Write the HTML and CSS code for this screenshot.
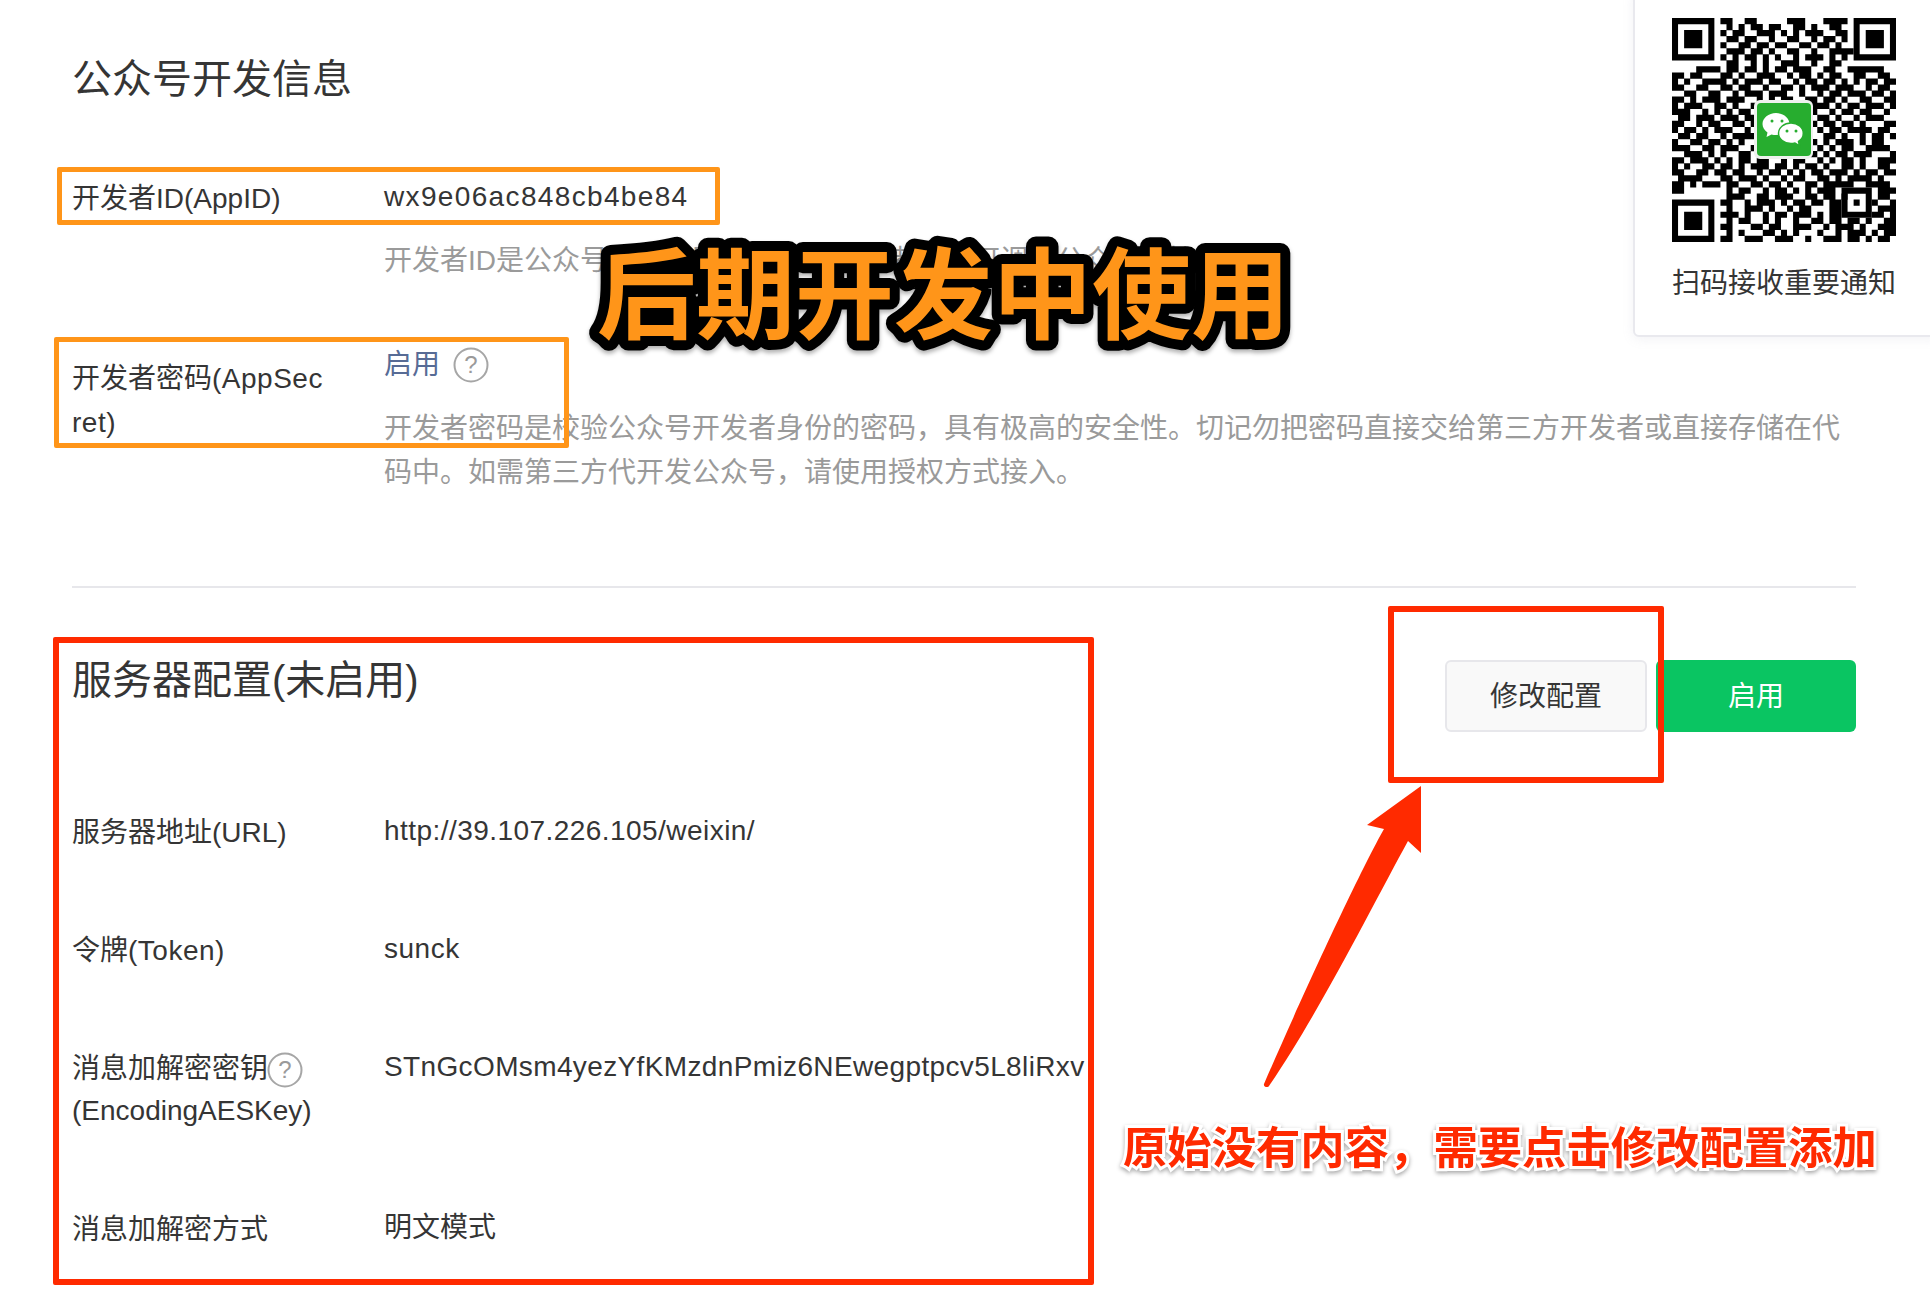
FILE: index.html
```html
<!DOCTYPE html>
<html lang="zh">
<head>
<meta charset="utf-8">
<title>公众号开发信息</title>
<link rel="stylesheet" href="styles.css">
</head>
<body>
<div class="page">
  <main class="main">
    <section class="dev-info">
      <h2 class="title">公众号开发信息</h2>
      <div class="row row-id">
        <div class="label">开发者ID(AppID)</div>
        <div class="content">
          <div class="value value-id">wx9e06ac848cb4be84</div>
          <p class="tips">开发者ID是公众号开发识别码，配合开发者密码可调用公众号的接口能力</p>
        </div>
      </div>
      <div class="row">
        <div class="label label-secret">开发者密码<span class="latin">(AppSecret)</span></div>
        <div class="content">
          <div class="value value-enable"><a class="link">启用</a><svg class="help help-lg" viewBox="0 0 36 36"><circle cx="18" cy="18" r="16.5"/><text x="18" y="26" text-anchor="middle">?</text></svg></div>
          <p class="tips">开发者密码是校验公众号开发者身份的密码，具有极高的安全性。切记勿把密码直接交给第三方开发者或直接存储在代码中。如需第三方代开发公众号，请使用授权方式接入。</p>
        </div>
      </div>
    </section>

    <section class="server">
      <header class="server-head">
        <h2 class="title">服务器配置(未启用)</h2>
        <div class="actions">
          <button class="btn btn-default">修改配置</button>
          <button class="btn btn-primary">启用</button>
        </div>
      </header>
      <div class="server-rows">
        <div class="row">
          <div class="label">服务器地址(URL)</div>
          <div class="value value-url">http://39.107.226.105/weixin/</div>
        </div>
        <div class="row">
          <div class="label">令牌<span class="latin">(Token)</span></div>
          <div class="value value-token">sunck</div>
        </div>
        <div class="row">
          <div class="label"><span class="label-line">消息加解密密钥<svg class="help help-sm" viewBox="0 0 36 36"><circle cx="18" cy="18" r="16.5"/><text x="18" y="26" text-anchor="middle">?</text></svg></span><span class="label-line">(EncodingAESKey)</span></div>
          <div class="value value-key">STnGcOMsm4yezYfKMzdnPmiz6NEwegptpcv5L8liRxv</div>
        </div>
        <div class="row">
          <div class="label">消息加解密方式</div>
          <div class="value">明文模式</div>
        </div>
      </div>
    </section>
  </main>

  <aside class="qr-card">
    <svg class="qr" viewBox="0 0 224 224">
      <g transform="scale(6.054)">
        <path class="qr-modules" d="M0 .5h7M0 1.5h1m5 0h1M0 2.5h1m1 0h3m1 0h1M0 3.5h1m1 0h3m1 0h1M0 4.5h1m1 0h3m1 0h1M0 5.5h1m5 0h1M0 6.5h7M30 .5h7M30 1.5h1m5 0h1M30 2.5h1m1 0h3m1 0h1M30 3.5h1m1 0h3m1 0h1M30 4.5h1m1 0h3m1 0h1M30 5.5h1m5 0h1M30 6.5h7M0 30.5h7M0 31.5h1m5 0h1M0 32.5h1m1 0h3m1 0h1M0 33.5h1m1 0h3m1 0h1M0 34.5h1m1 0h3m1 0h1M0 35.5h1m5 0h1M0 36.5h7M28 28.5h5M28 29.5h1m3 0h1M28 30.5h1m1 0h1m1 0h1M28 31.5h1m3 0h1M28 32.5h5"/>
        <path class="qr-modules" d="M8 .5h2m2 0h2m5 0h3m3 0h4M9 1.5h1m1 0h1m1 0h2m1 0h2m2 0h2m1 0h1m2 0h2M8 2.5h1m1 0h2m2 0h3m1 0h1m1 0h1m1 0h3m2 0h2M9 3.5h2m1 0h2m2 0h1m2 0h2m2 0h1m1 0h2m1 0h1M8 4.5h1m2 0h2m1 0h2m1 0h2m2 0h2m1 0h2m1 0h1M9 5.5h3m1 0h2m1 0h1m2 0h2m2 0h1m2 0h4M8 6.5h1m1 0h1m1 0h2m1 0h1m1 0h1m2 0h1m1 0h3m1 0h1m1 0h1M9 7.5h2m2 0h1m1 0h1m2 0h3m2 0h1m2 0h2M4 8.5h4m1 0h2m1 0h2m1 0h1m1 0h2m1 0h3m2 0h2m2 0h6M0 9.5h2m1 0h2m3 0h2m1 0h1m2 0h3m2 0h1m1 0h2m1 0h1m1 0h2m2 0h2m2 0h2M0 10.5h1m1 0h1m2 0h4m1 0h1m1 0h3m1 0h2m2 0h1m1 0h2m1 0h2m1 0h1m1 0h1m1 0h2m1 0h2M0 11.5h2m2 0h2m2 0h2m1 0h2m2 0h1m2 0h2m1 0h1m1 0h3m1 0h3m2 0h1m1 0h2M2 12.5h2m2 0h2m2 0h1m1 0h3m1 0h3m2 0h1m2 0h1m1 0h2m1 0h3m1 0h2m1 0h1M0 13.5h2m1 0h1m1 0h3m1 0h3m2 0h1m1 0h1m1 0h2m2 0h2m1 0h2m1 0h1m2 0h2m2 0h2M0 14.5h1m1 0h3m2 0h2m1 0h1m2 0h3m1 0h2m2 0h1m1 0h3m1 0h1m1 0h2m1 0h3m1 0h1M0 15.5h3m2 0h1m1 0h1m1 0h1m1 0h2m1 0h2m1 0h1m1 0h1m2 0h2m2 0h1m1 0h2m1 0h2m2 0h1M1 16.5h2m1 0h3m1 0h3m1 0h2m2 0h2m2 0h2m2 0h2m1 0h1m2 0h1m1 0h3M0 17.5h2m2 0h1m1 0h2m2 0h2m1 0h1m1 0h2m1 0h1m1 0h1m1 0h2m1 0h2m1 0h2m1 0h1m3 0h2M0 18.5h1m1 0h2m1 0h1m1 0h3m2 0h1m1 0h1m2 0h1m1 0h1m1 0h1m2 0h1m1 0h2m1 0h4m1 0h2M1 19.5h2m1 0h2m2 0h1m1 0h4m2 0h2m1 0h2m1 0h1m2 0h2m1 0h1m2 0h1m1 0h2m1 0h1M0 20.5h1m2 0h2m1 0h2m1 0h1m1 0h1m2 0h2m2 0h1m1 0h4m1 0h1m1 0h3m1 0h1m1 0h2M0 21.5h3m2 0h2m1 0h3m2 0h2m1 0h2m1 0h1m1 0h1m2 0h1m1 0h1m1 0h2m2 0h4M2 22.5h3m1 0h1m1 0h1m2 0h2m1 0h2m1 0h1m2 0h4m1 0h1m1 0h2m1 0h3m3 0h1M0 23.5h2m1 0h3m1 0h1m1 0h1m1 0h2m1 0h2m2 0h1m1 0h2m2 0h1m1 0h1m1 0h2m1 0h1m2 0h3m1 0h1M0 24.5h1m1 0h1m2 0h2m1 0h2m1 0h1m1 0h3m1 0h2m1 0h1m1 0h2m1 0h1m2 0h2m1 0h1m2 0h2M0 25.5h2m2 0h2m1 0h2m1 0h2m2 0h1m1 0h2m1 0h1m1 0h1m1 0h2m1 0h3m1 0h1m1 0h2m1 0h2M1 26.5h4m3 0h2m1 0h3m1 0h1m2 0h1m1 0h2m2 0h2m1 0h1m1 0h4m1 0h1M0 27.5h2m1 0h1m1 0h3m1 0h2m2 0h2m1 0h2m1 0h1m2 0h2m1 0h5m2 0h4M0 28.5h2m7 0h1m1 0h2m2 0h1m1 0h2m1 0h1m1 0h1m1 0h3M34 28.5h3M9 29.5h3m2 0h2m1 0h3m2 0h2m1 0h2m1 0h1m5 0h2M8 30.5h2m2 0h1m1 0h3m1 0h1m1 0h2m1 0h2m1 0h2m5 0h1m2 0h1M9 31.5h1m2 0h3m1 0h1m2 0h1m1 0h2m3 0h2M34 31.5h3M8 32.5h3m1 0h1m2 0h1m1 0h2m1 0h3m1 0h1m1 0h2m5 0h2m1 0h1M9 33.5h1m1 0h2m2 0h1m1 0h1m2 0h1m2 0h2m1 0h2m1 0h2m1 0h1m2 0h2M8 34.5h2m3 0h2m1 0h2m2 0h3m2 0h1m1 0h3m1 0h1m2 0h3M9 35.5h1m1 0h1m3 0h2m1 0h1m1 0h1m3 0h1m2 0h1m1 0h3m1 0h1m1 0h2M8 36.5h2m2 0h3m2 0h3m2 0h1m2 0h3m1 0h2m1 0h1m1 0h2m1 0h1"/>
      </g>
      <rect class="qr-logo-rim" x="82" y="82" width="59" height="59" rx="6"/>
      <rect class="qr-logo" x="85" y="85" width="54" height="53" rx="4"/>
      <path class="qr-bubble" d="M104 95c-7.500 0-13.500 5-13.500 11 0 3.500 2 6.500 5 8.500l-1 4.500 5-2.500c1.500.4 3 .6 4.500.6 7.500 0 13.500-5 13.500-11s-6-11-13.500-11z"/>
      <path class="qr-bubble qr-bubble-front" d="M119 105c-6.800 0-12.500 4.600-12.500 10.300s5.700 10.300 12.500 10.300c1.400 0 2.700-.2 4-.6l4.500 2.800-1-4.300c3-1.900 4.800-4.900 4.800-8.200 0-5.700-5.500-10.300-12.300-10.300z"/>
      <circle class="qr-eye" cx="100" cy="103" r="1.500"/><circle class="qr-eye" cx="110" cy="103" r="1.500"/>
      <circle class="qr-eye" cx="115" cy="113" r="1.500"/><circle class="qr-eye" cx="124" cy="113" r="1.500"/>
    </svg>
    <p class="qr-caption">扫码接收重要通知</p>
  </aside>

  <div class="mark mark-orange mark-id"></div>
  <div class="mark mark-orange mark-secret"></div>
  <div class="mark mark-red mark-server"></div>
  <div class="mark mark-red mark-edit"></div>
  <svg class="banner" viewBox="0 0 760 140"><text x="20" y="104">后期开发中使用</text></svg>
  <svg class="arrow" viewBox="0 0 170 310"><path d="M162 3l0 67-13-12C115 120 60 230 10 303c-1 2-6 1-5-2C40 220 100 90 125 46l-17-4z"/></svg>
  <div class="note">原始没有内容，需要点击修改配置添加</div>
</div>
</body>
</html>
```
FILE: styles.css
```css
* { box-sizing: border-box; }
html, body { margin: 0; padding: 0; background: #fff; }
.page {
  position: relative;
  width: 1930px;
  height: 1310px;
  overflow: hidden;
  font-family: "Liberation Sans", "Noto Sans CJK SC", sans-serif;
  font-size: 28px;
  line-height: 44px;
  color: #353535;
}
.main { padding: 51px 74px 0 72px; }
.title { margin: 0; font-size: 40px; font-weight: 400; line-height: 56px; }

.row { display: flex; align-items: flex-start; }
.row-id { margin-top: 68px; margin-bottom: 60px; }
.label { flex: none; width: 312px; padding-right: 54px; padding-top: 2px; word-break: break-all; }
.label-secret { padding-top: 14px; }
.label-line { display: block; height: 42px; white-space: nowrap; }
.label-line + .label-line { margin-bottom: 3px; }
.latin { letter-spacing: .5px; }
.content { flex: 1; min-width: 0; }
.value { min-height: 44px; }
.value-id { letter-spacing: 1.35px; }
.value-url { letter-spacing: .45px; }
.value-token { letter-spacing: .5px; }
.value-key { letter-spacing: .37px; white-space: nowrap; }
.value-enable { display: flex; align-items: center; height: 44px; }
.link { color: #576b95; }
.tips { margin: 20px 0 0; color: #9a9a9a; line-height: 44px; }

.help { fill: none; stroke: #a6a6a6; stroke-width: 2; }
.help text { fill: #9a9a9a; stroke: none; font-size: 24px; }
.help-lg { width: 36px; height: 36px; margin-left: 13px; }
.help-sm { width: 36px; height: 36px; vertical-align: -10px; margin-left: -1px; }

.server { margin-top: 91px; padding-top: 64px; border-top: 2px solid #e7e7eb; }
.server-head { display: flex; justify-content: space-between; align-items: flex-start; }
.actions { display: flex; gap: 9px; margin-top: 8px; }
.btn { width: 200px; height: 72px; border-radius: 6px; font: inherit; padding: 2px 0 0; }
.btn-default { width: 202px; background: #f9f9f9; border: 2px solid #e7e7eb; color: #353535; }
.btn-primary { background: #0ac562; border: 0; color: #fff; }
.server-rows { display: flex; flex-direction: column; gap: 72px; margin-top: 77px; }

.qr-card {
  position: absolute;
  top: -10px;
  right: -10px;
  width: 307px;
  height: 347px;
  padding: 26px 0 0 37px;
  background: #fff;
  border: 2px solid #e9e9ee;
  border-radius: 6px;
  box-shadow: 0 2px 12px rgba(150, 150, 170, .12);
}
.qr { display: block; width: 224px; height: 224px; }
.qr-modules { fill: none; stroke: #000; stroke-width: 1.03; }
.qr-logo-rim { fill: #eef1ee; }
.qr-logo { fill: #27ad2f; }
.qr-bubble { fill: #fff; }
.qr-bubble-front { stroke: #27ad2f; stroke-width: 1.5; }
.qr-eye { fill: #27ad2f; }
.qr-caption { margin: 20px 0 0; color: #353535; white-space: nowrap; }

.mark { position: absolute; border-radius: 2px; }
.mark-orange { border: 5px solid #ff9519; }
.mark-red { border: 6px solid #ff2a00; }
.mark-id { left: 57px; top: 167px; width: 663px; height: 58px; }
.mark-secret { left: 54px; top: 337px; width: 515px; height: 111px; }
.mark-server { left: 53px; top: 637px; width: 1041px; height: 648px; }
.mark-edit { left: 1388px; top: 606px; width: 276px; height: 177px; }

.banner {
  position: absolute;
  left: 577px;
  top: 227px;
  width: 760px;
  height: 140px;
  overflow: visible;
  filter: drop-shadow(0 3px 2px rgba(0, 0, 0, .3));
}
.banner text {
  font-size: 99px;
  font-weight: 700;
  fill: #ff9519;
  stroke: #000;
  stroke-width: 20px;
  stroke-linejoin: round;
  paint-order: stroke fill;
}
.arrow { position: absolute; left: 1259px; top: 783px; width: 170px; height: 310px; fill: #ff2a00; }
.note {
  position: absolute;
  left: 1123px;
  top: 1119px;
  font-size: 44.35px;
  line-height: 60px;
  font-weight: 700;
  white-space: nowrap;
  color: #ff2a00;
  -webkit-text-stroke: 6px #fff;
  paint-order: stroke fill;
  filter: drop-shadow(0 2px 2px rgba(0, 0, 0, .35));
}
```
